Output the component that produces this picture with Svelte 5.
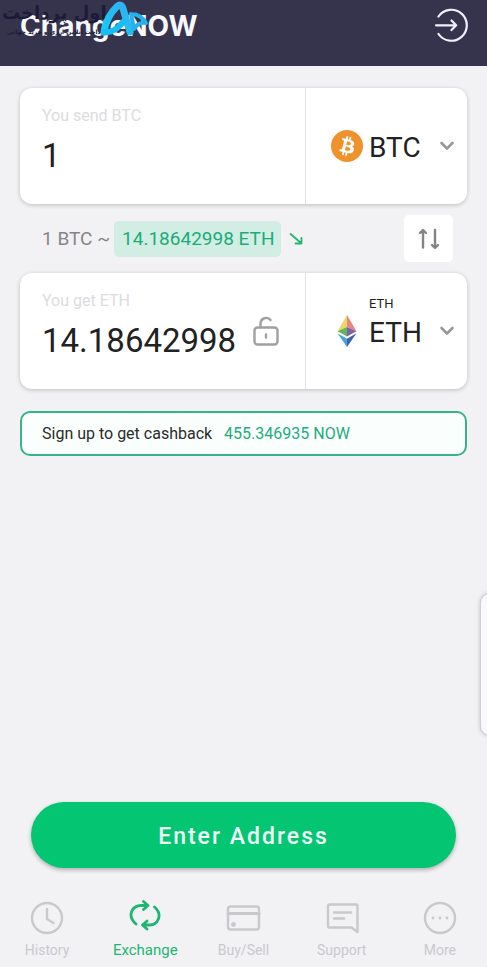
<script>
  let sendAmount = $state('1');
  let getAmount = $state('14.18642998');
  let sendCoin = $state('BTC');
  let getCoin = $state('ETH');
  let active = $state('Exchange');

  const tabs = ['History', 'Exchange', 'Buy/Sell', 'Support', 'More'];
</script>

{#snippet chevron()}
  <svg class="chevron" width="16" height="10" viewBox="0 0 16 10" aria-hidden="true">
    <path d="M2.5 2 8 7.5 13.5 2" fill="none" stroke="#98989a" stroke-width="2.6" stroke-linecap="round" stroke-linejoin="round" />
  </svg>
{/snippet}

<div class="app">
  <header>
    <h1>ChangeNOW</h1>
    <button class="plain" aria-label="Log in">
      <svg width="36" height="36" viewBox="0 0 36 36" fill="none" stroke="#f0f0fa" stroke-width="2.2" stroke-linecap="round" stroke-linejoin="round">
        <path d="M5.5 8.500a15.500 15.500 0 1 1 0 17.500" />
        <path d="M3 17.300h20M18.500 12.500l4.700 4.800-4.700 4.800" />
      </svg>
    </button>
    <div class="watermark" dir="rtl">
      <div class="brand">اول پرداخت</div>
      <div class="motto">پرداخت آنلاین ارزی و خرید جهانی</div>
    </div>
    <svg class="mark" width="52" height="38" viewBox="0 0 52 38" aria-hidden="true">
      <defs>
        <linearGradient id="sky" x1="0" y1="1" x2="1" y2="0">
          <stop offset="0" stop-color="#12cdf8" />
          <stop offset="1" stop-color="#35adf3" />
        </linearGradient>
      </defs>
      <path d="M6 32C7 22 13 12 19 6.500c3-2.500 5-1.500 6 2l7 23.500" fill="none" stroke="url(#sky)" stroke-width="7" stroke-linecap="round" stroke-linejoin="round" />
      <path d="M6 32c8 1 13-3 19-10" fill="none" stroke="#17bdf5" stroke-width="6" stroke-linecap="round" />
      <path d="M33 14l3 15M33 14c7 0 12 4 15 9-5-1-9 1-12 6" fill="none" stroke="#22b2f1" stroke-width="4" stroke-linecap="round" stroke-linejoin="round" />
    </svg>
  </header>

  <main>
    <section class="card">
      <div class="amount">
        <label for="send">You send BTC</label>
        <input id="send" inputmode="decimal" bind:value={sendAmount} />
      </div>
      <div class="coin">
        <div class="pick">
          <svg width="32" height="32" viewBox="0 0 32 32" aria-hidden="true">
            <circle cx="16" cy="16" r="16" fill="#f0922b" />
            <path fill="#fff" d="M23.189 14.02c.314-2.096-1.283-3.223-3.465-3.975l.708-2.84-1.728-.43-.69 2.765c-.454-.114-.92-.22-1.385-.326l.695-2.783L15.596 6l-.708 2.839c-.376-.086-.746-.17-1.104-.26l.002-.009-2.384-.595-.46 1.846s1.283.294 1.256.312c.7.175.826.638.805 1.006l-.806 3.235c.048.012.11.03.18.057l-.183-.045-1.13 4.532c-.086.212-.303.531-.793.41.018.025-1.256-.313-1.256-.313l-.858 1.978 2.25.561c.418.105.828.215 1.231.318l-.715 2.872 1.727.43.708-2.84c.472.127.93.245 1.378.357l-.706 2.828 1.728.43.715-2.866c2.948.558 5.164.333 6.097-2.333.752-2.146-.037-3.385-1.588-4.192 1.13-.26 1.98-1.003 2.207-2.538zm-3.95 5.538c-.533 2.147-4.148.986-5.32.695l.95-3.805c1.172.293 4.929.872 4.37 3.11zm.535-5.569c-.487 1.953-3.495.96-4.47.717l.86-3.45c.975.243 4.118.696 3.61 2.733z" />
          </svg>
          <select aria-label="Currency to send" bind:value={sendCoin}>
            <option>BTC</option>
            <option>ETH</option>
          </select>
          {@render chevron()}
        </div>
      </div>
    </section>

    <div class="rate">
      <span>1 BTC ~</span>
      <strong>14.18642998 ETH</strong>
      <svg width="14" height="14" viewBox="0 0 14 14" fill="none" stroke="#22b573" stroke-width="1.8" stroke-linecap="round" stroke-linejoin="round" aria-hidden="true">
        <path d="M1.500 2 12 11M12.500 6v5.500H6.500" />
      </svg>
      <button class="swap" aria-label="Swap currencies">
        <svg width="24" height="22" viewBox="0 0 24 22" fill="none" stroke="#838385" stroke-width="2.4" stroke-linecap="round" stroke-linejoin="round">
          <path d="M6 19.500V2.500M3 5 6 2l3 3M18 2v17M15 17l3 3 3-3" />
        </svg>
      </button>
    </div>

    <section class="card">
      <div class="amount">
        <label for="get">You get ETH</label>
        <input id="get" inputmode="decimal" bind:value={getAmount} />
      </div>
      <button class="plain lock" aria-label="Lock the rate">
        <svg width="26" height="30" viewBox="0 0 26 30" fill="none" stroke="#a0a0a2" stroke-width="2.4" stroke-linecap="round">
          <rect x="1.500" y="11.500" width="23" height="17" rx="3" />
          <path d="M7.500 11V8c0-6 7-8 10-4M13 18.500v3" />
        </svg>
      </button>
      <div class="coin">
        <span class="network">ETH</span>
        <div class="pick">
          <svg width="32" height="32" viewBox="0 0 32 32" aria-hidden="true">
            <path d="M16 0 6.500 16.200 16 12z" fill="#ecd867" />
            <path d="M16 0v12l9.500 4.200z" fill="#ea8580" />
            <path d="M6.500 16.200 16 12v9.600z" fill="#67b457" />
            <path d="M25.500 16.200 16 12v9.600z" fill="#8260a9" />
            <path d="M6.500 18.200 16 23.800V32z" fill="#42a5dc" />
            <path d="M25.500 18.200 16 23.800V32z" fill="#3e62ae" />
          </svg>
          <select aria-label="Currency to get" bind:value={getCoin}>
            <option>ETH</option>
            <option>BTC</option>
          </select>
          {@render chevron()}
        </div>
      </div>
    </section>

    <a class="cashback" href="#signup">Sign up to get cashback <b>455.346935 NOW</b></a>

    <button class="submit">Enter Address</button>
  </main>

  <nav>
    {#each tabs as tab}
      <button class="plain tab" class:active={active === tab} onclick={() => (active = tab)}>
        <svg width="36" height="36" viewBox="0 0 36 36" fill="none" stroke="currentColor" stroke-width="2.4" stroke-linecap="round" stroke-linejoin="round" aria-hidden="true">
          {#if tab === 'History'}
            <circle cx="18" cy="18" r="15" /><path d="M18 9v10l6.500 4" />
          {:else if tab === 'Exchange'}
            <path stroke-width="2.800" d="M9 24C-1 15 6 5.500 14 5.500h6M16.500 1.500l4.500 4-4.500 4M27.500 7c9 8 3 18-5 18h-7M20 21l-4.500 4 4.500 4" />
          {:else if tab === 'Buy/Sell'}
            <rect x="3" y="6.500" width="31" height="23" rx="2.500" /><path stroke-width="3" d="M3 13.500h31" /><circle cx="8.500" cy="24.500" r="1.200" fill="currentColor" />
          {:else if tab === 'Support'}
            <path d="M5.500 4.500h27a1 1 0 0 1 1 1V32l-6-4.500h-22A1.500 1.500 0 0 1 4 26V6a1.500 1.500 0 0 1 1.500-1.500z" /><path stroke-width="2.600" d="M10 12.500h17M10 18.500h10" />
          {:else}
            <circle cx="18" cy="18" r="15" />
            <g fill="currentColor" stroke="none"><circle cx="11" cy="18" r="1.400" /><circle cx="18" cy="18" r="1.400" /><circle cx="25" cy="18" r="1.400" /></g>
          {/if}
        </svg>
        <span>{tab}</span>
      </button>
    {/each}
  </nav>

  <div class="edge-handle"></div>
</div>

<style>
  .app {
    position: relative;
    display: flex;
    flex-direction: column;
    min-height: 100vh;
    overflow: hidden;
    background: #f2f2f5;
    color: #222;
    font-family: Roboto, 'Liberation Sans', sans-serif;
  }
  .app * {
    box-sizing: border-box;
  }
  button,
  input,
  select {
    font-family: inherit;
    color: inherit;
    margin: 0;
  }
  svg {
    display: block;
    flex: none;
  }
  .plain {
    padding: 0;
    border: 0;
    background: none;
  }
  header {
    position: relative;
    display: flex;
    justify-content: space-between;
    height: 66px;
    padding: 8px 18px 0 20px;
    background: #35344c;
  }
  header .plain {
    align-self: flex-start;
  }
  h1 {
    margin: 0;
    color: #f7f7fc;
    font: 700 28px/36px Inter, 'Liberation Sans', sans-serif;
  }
  .watermark {
    position: absolute;
    left: 2px;
    top: 0;
    color: #1d1b39;
    font-family: 'DejaVu Sans', sans-serif;
    white-space: nowrap;
  }
  .brand {
    font-size: 18px;
    font-weight: 700;
    line-height: 26px;
  }
  .motto {
    font-size: 6px;
    font-weight: 700;
    line-height: 12px;
  }
  .mark {
    position: absolute;
    left: 98px;
    top: 0;
  }
  main {
    display: flex;
    flex: 1;
    flex-direction: column;
    padding: 22px 20px 20px;
  }
  .card {
    display: flex;
    min-height: 116px;
    border-radius: 12px;
    background: #fff;
    box-shadow: 0 1px 4px rgba(0, 0, 0, 0.22);
  }
  .amount {
    display: flex;
    flex: 1;
    flex-direction: column;
    min-width: 0;
    padding: 18px 0 0 22px;
  }
  label {
    color: #dcdcde;
    font-size: 16px;
    line-height: 20px;
  }
  .amount input {
    width: 100%;
    height: 40px;
    margin-top: 9px;
    padding: 0;
    border: 0;
    outline: 0;
    background: none;
    font-size: 33px;
  }
  .lock {
    align-self: center;
    margin-right: 26px;
  }
  .coin {
    display: grid;
    grid-template-rows: 1fr auto 1fr;
    width: 162px;
    padding: 0 12px 0 25px;
    border-left: 1px solid #e2e2e4;
  }
  .network {
    align-self: end;
    padding-left: 38px;
    font-size: 13px;
    line-height: 18px;
  }
  .pick {
    display: flex;
    grid-row: 2;
    align-items: center;
    gap: 6px;
  }
  select {
    flex: 1;
    min-width: 0;
    height: 36px;
    padding: 2px 0 0;
    border: 0;
    appearance: none;
    background: none;
    font-size: 28px;
  }
  .rate {
    display: flex;
    align-items: center;
    height: 69px;
    padding: 0 14px 0 22px;
    color: #858587;
    font-size: 19px;
  }
  .rate strong {
    margin: 0 8px 0 4px;
    padding: 0 7px 0 8px;
    border-radius: 5px;
    background: #d2eee4;
    color: #1bac78;
    font-weight: 400;
    line-height: 36px;
  }
  .swap {
    display: grid;
    place-items: center;
    width: 49px;
    height: 47px;
    margin-left: auto;
    padding: 0;
    border: 0;
    border-radius: 5px;
    background: #fff;
  }
  .cashback {
    margin-top: 22px;
    padding: 1px 20px 0;
    border: 2px solid #35b587;
    border-radius: 10px;
    background: #fafffd;
    color: #2b2b2b;
    font-size: 16px;
    line-height: 40px;
    text-decoration: none;
  }
  b {
    margin-left: 8px;
    color: #22ac7b;
    font-weight: 400;
  }
  .submit {
    height: 66px;
    margin: auto 11px 0;
    padding: 2px 0 0;
    border: 0;
    border-radius: 33px;
    background: #03c572;
    box-shadow: 0 2px 4px rgba(0, 0, 0, 0.28);
    color: #effff7;
    font-size: 23px;
    font-weight: 500;
    letter-spacing: 2px;
  }
  nav {
    display: grid;
    grid-template-columns: repeat(5, 1fr);
    padding: 12px 0 7px;
    margin: 0 -2px;
  }
  .tab {
    display: flex;
    flex-direction: column;
    align-items: center;
    gap: 4px;
    color: #c9c9cc;
    font-size: 14px;
    line-height: 20px;
  }
  .tab.active {
    color: #1fb573;
    font-size: 15px;
  }
  .edge-handle {
    position: absolute;
    top: 593px;
    right: -13px;
    width: 20px;
    height: 143px;
    border: 1px solid #cfcfd6;
    border-radius: 12px;
    background: #f8f8fe;
    box-shadow: 0 0 4px rgba(0, 0, 0, 0.2);
  }
</style>
